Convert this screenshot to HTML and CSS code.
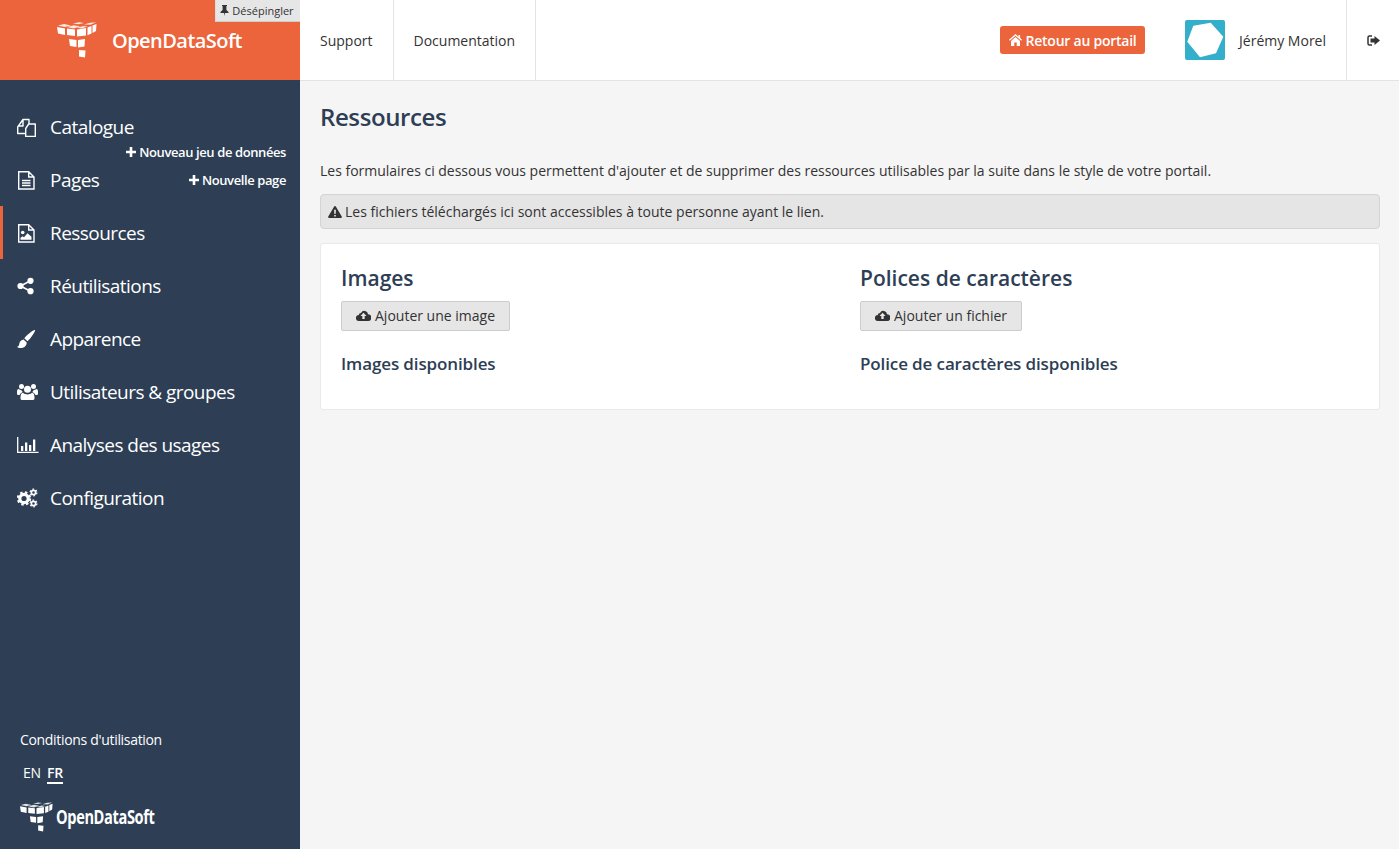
FILE: index.html
```html
<!DOCTYPE html>
<html lang="fr">
<head>
<meta charset="utf-8">
<title>Ressources</title>
<link rel="stylesheet" href="styles.css">
</head>
<body>
<svg class="defs" width="0" height="0" aria-hidden="true">
  <symbol id="cube" viewBox="0 0 40 36">
    <path d="M0 5l8 1.500V13L1 11.500zM10 6.500l8 1V14l-8-1zM20 7.500l9-1.500v7.500l-9 1zM30.500 5.500l4-1.500v7.500l-4 1.700zM35.500 3.500l4-1.500-.5 7-3.500 2zM12 17l7.500 1v7l-6.500-1zM21 18l7-1-.5 7.500-6.500 1zM22 28l6.500.5-.5 7-6-1z" fill="#fff"/>
    <path d="M1 3.500l6-1.500 7 1.500-6.500 1.500zM10 5l7-1.700 6 1.200-6.500 2zM20 5.800l6.500-1.800 4 .6-6 1.800zM16 1.500l6-1.200 5 .7-5.500 1.300zM27 2.500l6-1.700 6-.5-5.500 2.500z" fill="#fff" opacity=".85"/>
  </symbol>
</svg>
<div class="app">
  <aside class="sidebar">
    <div class="brand">
      <svg class="brand-cube" width="40" height="36"><use href="#cube"/></svg>
      <span class="brand-name">OpenDataSoft</span>
      <button class="unpin">
        <svg width="9" height="11" viewBox="0 0 9 11"><path d="M2 0h5v1h-.6v4L8.500 7v1H5l-.5 3-.5-3H.5V7l2.100-2V1H2z" fill="#333"/></svg>
        Désépingler
      </button>
    </div>
    <nav class="nav">
      <a class="nav-item">
        <svg class="nav-icon" viewBox="0 0 20 20"><path d="M12 6.500v-4H6L.7 10v6.500h7.800M6 2.500V9H.7M8.700 11.500L11.700 7H18.300v12.500H8.700z" fill="none" stroke="#fff" stroke-width="1.400" stroke-linejoin="round"/></svg>
        <span>Catalogue</span>
        <span class="nav-action nav-action-low"><svg width="10" height="10" viewBox="0 0 10 10"><path d="M3.700 0h2.600v3.700H10v2.600H6.300V10H3.700V6.300H0V3.700h3.700z" fill="#fff"/></svg> Nouveau jeu de données</span>
      </a>
      <a class="nav-item">
        <svg class="nav-icon" viewBox="0 0 20 20"><path d="M1.700 1.700h10l5.300 5.300v12H1.700zM11.700 1.700V7H17M5 10.500h8.500M5 13h8.500M5 15.500h8.500" fill="none" stroke="#fff" stroke-width="1.400"/></svg>
        <span>Pages</span>
        <span class="nav-action"><svg width="10" height="10" viewBox="0 0 10 10"><path d="M3.700 0h2.600v3.700H10v2.600H6.300V10H3.700V6.300H0V3.700h3.700z" fill="#fff"/></svg> Nouvelle page</span>
      </a>
      <a class="nav-item active">
        <svg class="nav-icon" viewBox="0 0 20 20"><path d="M1.700 1.700h10l5.300 5.300v12H1.700zM11.700 1.700V7H17" fill="none" stroke="#fff" stroke-width="1.400"/><circle cx="5.700" cy="9.500" r="1.800" fill="#fff"/><path d="M3.500 16.800v-2l2-1.500 1.500 1 3.500-4 4 3.500v3z" fill="#fff"/></svg>
        <span>Ressources</span>
      </a>
      <a class="nav-item">
        <svg class="nav-icon" viewBox="0 0 20 20"><circle cx="13.500" cy="4.800" r="3.100" fill="#fff"/><circle cx="13.500" cy="15.200" r="3.100" fill="#fff"/><circle cx="3.500" cy="10" r="3.100" fill="#fff"/><path d="M13.500 4.800L3.500 10l10 5.200" fill="none" stroke="#fff" stroke-width="1.600"/></svg>
        <span>Réutilisations</span>
      </a>
      <a class="nav-item">
        <svg class="nav-icon" viewBox="0 0 20 20"><path d="M17.500 1c.5 0 .8.500.5 1.100-1.500 3.300-5 8-7.500 10.200L7.300 9.200C9.800 6.200 14.500 2.200 17.500 1zM6.600 10.400l3.100 3c0 3.600-3 5.600-6 5.600-1.700 0-3.100-.5-3.700-1.300 1.700-.3 2-1.200 2.300-3 .4-2.500 2.300-4 4.300-4.300z" fill="#fff"/></svg>
        <span>Apparence</span>
      </a>
      <a class="nav-item">
        <svg class="nav-icon nav-icon-wide" viewBox="0 0 22 20"><circle cx="10.500" cy="7.200" r="3.500" fill="#fff"/><circle cx="4.500" cy="4.500" r="2.500" fill="#fff"/><circle cx="16.500" cy="4.500" r="2.500" fill="#fff"/><path d="M5 18c-1.200 0-1.500-.8-1.500-2 0-3 .6-5 2.500-5.200 1 .9 2.800 1.700 4.500 1.700s3.500-.8 4.500-1.700c1.900.2 2.500 2.200 2.500 5.200 0 1.200-.3 2-1.500 2z" fill="#fff"/><path d="M0 10c0-1.700.5-3 1.700-3 .8.700 2 1 2.500.9a5 5 0 0 0 1.500 2A6 6 0 0 0 2.500 13H1c-.7 0-1-.5-1-1.200zM21 10c0-1.700-.5-3-1.700-3-.8.700-2 1-2.500.9a5 5 0 0 1-1.500 2A6 6 0 0 1 18.500 13H20c.7 0 1-.5 1-1.200z" fill="#fff"/></svg>
        <span>Utilisateurs &amp; groupes</span>
      </a>
      <a class="nav-item">
        <svg class="nav-icon nav-icon-wide" viewBox="0 0 22 20"><path d="M.7 2v15.300H21.500" fill="none" stroke="#fff" stroke-width="1.300"/><path d="M4 11h2.300v5H4zM8 7.500h2.300V16H8zM12 10h2.300v6H12zM16 4.500h2.300V16H16z" fill="#fff"/></svg>
        <span>Analyses des usages</span>
      </a>
      <a class="nav-item">
        <svg class="nav-icon nav-icon-wide" viewBox="0 0 22 20"><circle cx="7" cy="10.500" r="4.200" fill="none" stroke="#fff" stroke-width="3.200"/><circle cx="7" cy="10.500" r="6.200" fill="none" stroke="#fff" stroke-width="2" stroke-dasharray="2.500 2.400"/><circle cx="16.500" cy="4.500" r="2.100" fill="none" stroke="#fff" stroke-width="1.600"/><circle cx="16.500" cy="4.500" r="3.400" fill="none" stroke="#fff" stroke-width="1.200" stroke-dasharray="1.800 1.800"/><circle cx="16.500" cy="15.500" r="2.100" fill="none" stroke="#fff" stroke-width="1.600"/><circle cx="16.500" cy="15.500" r="3.400" fill="none" stroke="#fff" stroke-width="1.200" stroke-dasharray="1.800 1.800"/></svg>
        <span>Configuration</span>
      </a>
    </nav>
    <div class="side-foot">
      <a class="terms">Conditions d'utilisation</a>
      <div class="langs"><a>EN</a><a class="lang-on">FR</a></div>
      <div class="foot-logo">
        <svg width="33" height="30"><use href="#cube"/></svg>
        <span class="foot-name">OpenDataSoft</span>
      </div>
    </div>
  </aside>
  <div class="main">
    <header class="topbar">
      <a class="top-link">Support</a>
      <a class="top-link">Documentation</a>
      <div class="top-right">
        <a class="portal-btn">
          <svg width="13" height="12" viewBox="0 0 13 12"><path d="M6.500 0L9.500 2.700V1h1.600v3.100L13 5.800l-.8.900L6.500 1.800.8 6.700 0 5.800zM2 7l4.500-3.900L11 7v5H7.700V8.500H5.300V12H2z" fill="#fff"/></svg>
          Retour au portail
        </a>
        <div class="user">
          <span class="avatar"><svg width="40" height="40" viewBox="0 0 40 40"><path d="M8.300 5.700L25.700 2.700 38.300 16.700 31 33.300 15 37.300 2.300 21.700z" fill="#fff"/></svg></span>
          <span class="user-name">Jérémy Morel</span>
        </div>
        <a class="logout">
          <svg width="13" height="11" viewBox="0 0 13 11"><path d="M5 1H2.500C1.500 1 1 1.500 1 2.500v6C1 9.500 1.500 10 2.500 10H5" fill="none" stroke="#333" stroke-width="1.500"/><path d="M7.500 1L13 5.500 7.500 10V7.500H3.500v-4h4z" fill="#333"/></svg>
        </a>
      </div>
    </header>
    <main class="content">
      <h1 class="page-title">Ressources</h1>
      <p class="intro">Les formulaires ci dessous vous permettent d'ajouter et de supprimer des ressources utilisables par la suite dans le style de votre portail.</p>
      <div class="alert">
        <svg width="14" height="12" viewBox="0 0 15 13"><path d="M7.500 0c.4 0 .7.200.9.500l6.400 11c.4.700 0 1.500-.9 1.500H1.100c-.9 0-1.300-.8-.9-1.500L6.600.5C6.800.200 7.100 0 7.500 0zM6.500 4l.3 4.700h1.400L8.500 4zM6.600 9.800v1.700h1.800V9.800z" fill="#333" fill-rule="evenodd"/></svg>
        Les fichiers téléchargés ici sont accessibles à toute personne ayant le lien.
      </div>
      <section class="card">
        <div class="col">
          <h2 class="col-title">Images</h2>
          <button class="upload"><svg width="15" height="11" viewBox="0 0 15 11"><path d="M12 4.300A3.700 3.700 0 0 0 5 2.900 2.300 2.300 0 0 0 2.800 5 3 3 0 0 0 3 11h9a3.300 3.300 0 0 0 0-6.700zM7.500 2.800L10.500 6H8.700v3H6.300V6H4.500z" fill="#333" fill-rule="evenodd"/></svg> Ajouter une image</button>
          <h3 class="col-sub">Images disponibles</h3>
        </div>
        <div class="col">
          <h2 class="col-title">Polices de caractères</h2>
          <button class="upload"><svg width="15" height="11" viewBox="0 0 15 11"><path d="M12 4.300A3.700 3.700 0 0 0 5 2.900 2.300 2.300 0 0 0 2.800 5 3 3 0 0 0 3 11h9a3.300 3.300 0 0 0 0-6.700zM7.500 2.800L10.500 6H8.700v3H6.300V6H4.500z" fill="#333" fill-rule="evenodd"/></svg> Ajouter un fichier</button>
          <h3 class="col-sub">Police de caractères disponibles</h3>
        </div>
      </section>
    </main>
  </div>
</div>
</body>
</html>
```
FILE: styles.css
```css
* { box-sizing: border-box; }
html, body { margin: 0; height: 100%; }
body { font-family: "Open Sans", sans-serif; font-size: 14px; color: #333; background: #f5f5f5; overflow: hidden; }
.defs { position: absolute; }
.app { display: flex; height: 849px; }

.sidebar { width: 300px; flex: none; display: flex; flex-direction: column; background: #2d3e55; color: #fff; }
.brand { position: relative; height: 80px; background: #ec643b; display: flex; align-items: center; padding-left: 57px; }
.brand-cube { flex: none; }
.brand-name { margin-left: 15px; font-size: 20px; font-weight: 600; letter-spacing: -0.55px; color: #fff; }
.unpin { position: absolute; top: 0; right: 0; width: 85px; height: 22px; padding: 0 2px 0 0; border: 0; border-left: 1px solid #ddd; border-bottom: 1px solid #ccc; background: #e6e6e6; color: #333; font: 11px "Open Sans", sans-serif; display: flex; align-items: center; justify-content: center; gap: 3px; }

.nav { padding-top: 20px; display: flex; flex-direction: column; }
.nav-item { position: relative; height: 53px; display: flex; align-items: center; padding-left: 17px; font-size: 19px; letter-spacing: -0.55px; color: #fff; }
.nav-item.active { box-shadow: inset 3px 0 0 #ec643b; }
.nav-icon { width: 20px; height: 20px; margin-right: 13px; flex: none; }
.nav-icon-wide { width: 22px; margin-right: 11px; }
.nav-action { position: absolute; right: 14px; top: 18px; display: flex; align-items: center; gap: 3px; font-size: 13px; font-weight: 600; letter-spacing: -0.4px; }
.nav-action-low { top: 43px; }

.side-foot { margin-top: auto; padding: 0 0 17px 20px; }
.terms { display: block; font-size: 14px; letter-spacing: -0.32px; line-height: 20px; }
.langs { display: flex; gap: 6px; margin: 13px 0 0 3px; font-size: 14px; line-height: 19px; letter-spacing: -0.2px; }
.lang-on { font-weight: 600; border-bottom: 2px solid #fff; }
.foot-logo { display: flex; align-items: center; margin-top: 18px; height: 30px; }
.foot-name { display: inline-block; font-weight: 700; font-size: 19px; letter-spacing: -0.5px; transform: scaleX(0.77); transform-origin: left center; margin-left: 3px; }

.main { flex: 1; min-width: 0; display: flex; flex-direction: column; }
.topbar { height: 81px; flex: none; background: #fff; border-bottom: 1px solid #e3e3e3; display: flex; align-items: stretch; }
.top-link { display: flex; align-items: center; padding: 0 20px; border-right: 1px solid #e3e3e3; }
.top-right { margin-left: auto; display: flex; align-items: center; }
.portal-btn { height: 28px; width: 145px; background: #ec643b; color: #fff; border-radius: 3px; font-weight: 600; letter-spacing: -0.24px; display: flex; align-items: center; justify-content: center; gap: 4px; }
.user { display: flex; align-items: center; margin-left: 40px; }
.avatar { width: 40px; height: 40px; background: #33aecb; border-radius: 2px; display: block; }
.avatar svg { display: block; }
.user-name { margin-left: 14px; padding-right: 20px; }
.logout { width: 53px; align-self: stretch; border-left: 1px solid #e3e3e3; display: flex; align-items: center; justify-content: center; }

.content { padding: 19px 19px 0 20px; }
.page-title { margin: 0; font-size: 24px; font-weight: 600; letter-spacing: -0.4px; line-height: 33px; color: #2d3e55; }
.intro { margin: 28px 0 0; line-height: 20px; letter-spacing: -0.01px; }
.alert { margin-top: 13px; height: 35px; display: flex; align-items: center; gap: 3px; padding-left: 7px; background: #e5e5e5; border: 1px solid #d4d4d4; border-radius: 4px; }
.card { margin-top: 14px; height: 167px; padding: 20px; background: #fff; border: 1px solid #e9e9e9; border-radius: 3px; display: grid; grid-template-columns: 1fr 1fr; column-gap: 20px; }
.col-title { margin: 0; font-size: 21px; font-weight: 600; line-height: 29px; color: #2d3e55; }
.upload { margin-top: 8px; height: 30px; display: flex; align-items: center; gap: 4px; padding: 0 14px 2px; background: #e6e6e6; border: 1px solid #ccc; border-radius: 2px; font: 14px "Open Sans", sans-serif; color: #333; }
.col-sub { margin: 21px 0 0; font-size: 17px; font-weight: 600; letter-spacing: -0.12px; line-height: 24px; color: #2d3e55; }
```
